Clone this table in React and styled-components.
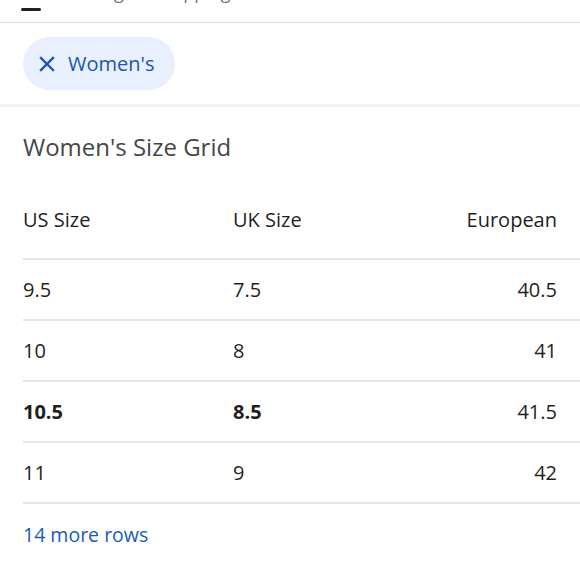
import React from "react";
import styled, { createGlobalStyle } from "styled-components";

const GlobalStyle = createGlobalStyle`
  body {
    margin: 0;
    background: #fff;
    font-family: "Open Sans", Roboto, Arial, sans-serif;
  }
`;

const Page = styled.div`
  width: 580px;
  height: 580px;
  overflow: hidden;
  background: #fff;
`;

const TabBar = styled.div`
  height: 22px;
  overflow: hidden;
  display: flex;
  align-items: flex-end;
  gap: 34px;
  padding: 0 21px;
  border-bottom: 1px solid #dadce0;
`;

const Tab = styled.div`
  display: flex;
  flex-direction: column;
  align-items: center;
  padding-bottom: 11px;
  color: ${(p) => (p.$active ? "#202124" : "#70757a")};
  font-size: 18px;
  line-height: 20px;
`;

const TabLabel = styled.span`
  margin-bottom: 6px;
`;

const Indicator = styled.span`
  align-self: stretch;
  height: 3px;
  border-radius: 2px;
  background: ${(p) => (p.$active ? "#202124" : "transparent")};
`;

const ChipRow = styled.div`
  padding: 14px 23px 14px;
  display: flex;
`;

const Chip = styled.button`
  height: 53px;
  display: flex;
  align-items: center;
  gap: 13px;
  padding: 0 21px 0 16px;
  border: none;
  border-radius: 27px;
  background: #e8f0fe;
  color: #1a56b0;
  font-family: "Open Sans", Roboto, Arial, sans-serif;
  font-size: 20px;
  font-weight: 500;
`;

const Divider = styled.div`
  height: 3px;
  background: #f3f3f3;
`;

const Section = styled.section`
  padding-left: 23px;
`;

const Title = styled.h2`
  margin: 24px 0 0;
  font-size: 24px;
  line-height: 31px;
  font-weight: 400;
  color: #444746;
`;

const Table = styled.div`
  display: grid;
  grid-template-columns: 210px 1fr 1fr;
`;

const HeadCell = styled.div`
  height: 96px;
  box-sizing: border-box;
  display: flex;
  align-items: flex-end;
  justify-content: ${(p) => (p.$right ? "flex-end" : "flex-start")};
  padding: 0 ${(p) => (p.$right ? "23px" : "0")} 26px 0;
  font-size: 20px;
  line-height: 24px;
  color: #1f1f1f;
`;

const Cell = styled.div`
  height: 61px;
  box-sizing: border-box;
  border-top: 2px solid #e6e6e6;
  display: flex;
  align-items: center;
  justify-content: ${(p) => (p.$right ? "flex-end" : "flex-start")};
  padding-right: ${(p) => (p.$right ? "23px" : "0")};
  font-size: 20px;
  font-weight: ${(p) => (p.$bold ? 700 : 400)};
  color: #1f1f1f;
`;

const MoreRow = styled.div`
  border-top: 2px solid #e6e6e6;
  height: 60px;
  display: flex;
  align-items: center;
  font-size: 19.5px;
  color: #1a5bb8;
`;

const CloseIcon = () => (
  <svg width="16" height="16" viewBox="0 0 16 16">
    <path
      d="M2 2 L14 14 M14 2 L2 14"
      stroke="currentColor"
      strokeWidth="2.4"
      strokeLinecap="square"
    />
  </svg>
);

const rows = [
  { us: "9.5", uk: "7.5", eu: "40.5" },
  { us: "10", uk: "8", eu: "41" },
  { us: "10.5", uk: "8.5", eu: "41.5", current: true },
  { us: "11", uk: "9", eu: "42" },
];

const App = () => {
  return (
    <Page>
      <GlobalStyle />
      <TabBar>
        <Tab $active>
          <TabLabel>All</TabLabel>
          <Indicator $active />
        </Tab>
        <Tab>
          <TabLabel>Sizing</TabLabel>
          <Indicator />
        </Tab>
        <Tab>
          <TabLabel>Shipping</TabLabel>
          <Indicator />
        </Tab>
      </TabBar>
      <ChipRow>
        <Chip>
          <CloseIcon />
          Women's
        </Chip>
      </ChipRow>
      <Divider />
      <Section>
        <Title>Women's Size Grid</Title>
        <Table>
          <HeadCell>US Size</HeadCell>
          <HeadCell>UK Size</HeadCell>
          <HeadCell $right>European</HeadCell>
          {rows.map((r) => (
            <React.Fragment key={r.us}>
              <Cell $bold={r.current}>{r.us}</Cell>
              <Cell $bold={r.current}>{r.uk}</Cell>
              <Cell $right>{r.eu}</Cell>
            </React.Fragment>
          ))}
        </Table>
        <MoreRow>14 more rows</MoreRow>
      </Section>
    </Page>
  );
};

export default App;
